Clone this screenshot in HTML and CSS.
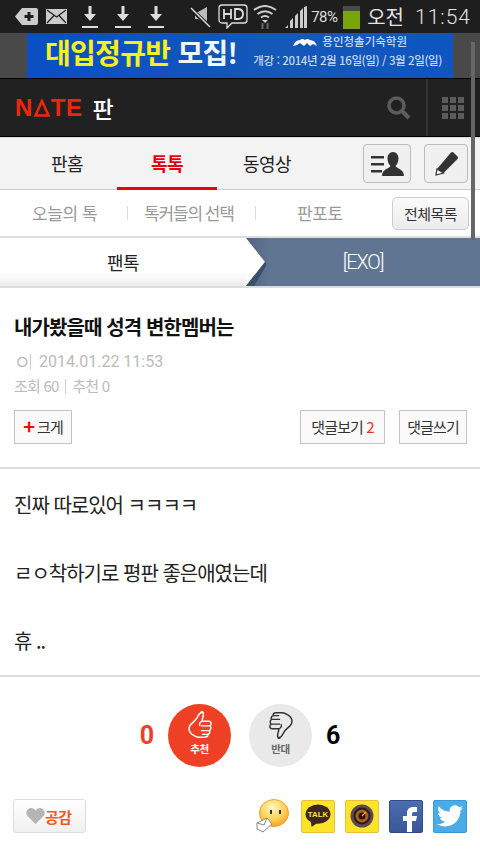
FILE: index.html
```html
<!DOCTYPE html>
<html lang="ko">
<head>
  <meta charset="UTF-8">
  <title>네이트 판</title>
  <link rel="stylesheet" href="styles.css">
</head>
<body>

  <!-- Status bar -->
  <div class="status-bar">
    <div class="status-left">
      <svg width="23" height="17" viewBox="0 0 23 17"><path d="M7 0h14a2 2 0 0 1 2 2v13a2 2 0 0 1-2 2H7L0 8.500z" fill="#ccc"/><path d="M14 4v9M9.500 8.500h9" stroke="#1e1e1e" stroke-width="3"/></svg>
      <svg class="mail" width="21" height="15" viewBox="0 0 21 15"><rect width="21" height="15" fill="#ccc"/><path d="M1 1l9.500 7L20 1M1 14l7-7.500M20 14l-7-7.500" fill="none" stroke="#1e1e1e" stroke-width="1.200"/></svg>
      <svg class="dl first" width="16" height="22" viewBox="0 0 16 22"><path d="M6.500 0h3v8H14l-6 7-6-7h4.500zM0 20h16v2H0z" fill="#ddd"/></svg>
      <svg class="dl" width="16" height="22" viewBox="0 0 16 22"><path d="M6.500 0h3v8H14l-6 7-6-7h4.500zM0 20h16v2H0z" fill="#ddd"/></svg>
      <svg class="dl" width="16" height="22" viewBox="0 0 16 22"><path d="M6.500 0h3v8H14l-6 7-6-7h4.500zM0 20h16v2H0z" fill="#ddd"/></svg>
    </div>
    <div class="status-right">
      <svg width="21" height="22" viewBox="0 0 21 22"><path d="M5 6h3l9-5v17l-9-5H5z" fill="#bbb"/><path d="M0 2l20 19" stroke="#1e1e1e" stroke-width="4"/><path d="M1 2l19 19" stroke="#ddd" stroke-width="1.500"/></svg>
      <svg class="hd" width="30" height="25" viewBox="0 0 30 25"><path d="M4 1h22a3 3 0 0 1 3 3v12a3 3 0 0 1-3 3H14l-5 5v-5H4a3 3 0 0 1-3-3V4a3 3 0 0 1 3-3z" fill="none" stroke="#ddd" stroke-width="1.300"/><path d="M6 5v10M13 5v10M6 10h7M17 5v10h3.500q4.500-.5 4.500-5t-4.500-5z" fill="none" stroke="#ddd" stroke-width="1.800"/></svg>
      <svg class="wifi" width="24" height="24" viewBox="0 0 24 24"><path d="M1 5q11-8 22 0M4.500 9q7.500-5.500 15 0M8 12.500q4-3 8 0" fill="none" stroke="#ccc" stroke-width="2"/><path d="M9 15l3 3 3-3z" fill="#ccc"/><path d="M9.500 24v-6M14.500 24v-6" stroke="#666" stroke-width="2"/></svg>
      <svg class="signal" width="23" height="22" viewBox="0 0 23 22"><path d="M0 22l3-3v3zM5 22v-7l3-3v10zM10 22V10l3-3v15zM15 22V5l3-3v20zM19 22V1l3-1v22z" fill="#ccc"/></svg>
      <span class="battery-pct">78%</span>
      <div class="battery"><div class="battery-fill"></div></div>
      <span class="clock"><span class="ampm">오전</span>11:54</span>
    </div>
  </div>

  <!-- Ad banner -->
  <div class="banner">
    <div class="banner-inner">
      <span class="banner-big"><span class="yellow">대입정규반</span> 모집!</span>
      <div class="banner-side">
        <span class="banner-school"><svg width="24" height="8" viewBox="0 0 24 8"><path d="M0 8q2-6 7-6 2-2 5 0 2-2 5 0 5 0 7 6l-4-2-3 2-3-3-3 3-4-3-3 2z" fill="#fff"/></svg>용인청솔기숙학원</span>
        <span class="banner-date">개강 : 2014년 2월 16일(일) / 3월 2일(일)</span>
      </div>
    </div>
  </div>

  <!-- Header -->
  <header class="site-header">
    <div class="logo"><span class="nate">N<svg width="18" height="19" viewBox="0 0 18 19"><path d="M9 3L15.500 17.500H2.500z" fill="none" stroke="#f0260a" stroke-width="2.500"/></svg>TE</span><span class="pan">판</span></div>
    <svg class="search" width="24" height="24" viewBox="0 0 24 24"><circle cx="9.500" cy="9.500" r="7.500" fill="none" stroke="#5c5c5c" stroke-width="3.500"/><path d="M15 15l7 7" stroke="#5c5c5c" stroke-width="4"/></svg>
    <div class="grid-btn">
      <i></i><i></i><i></i><i></i><i></i><i></i><i></i><i></i><i></i>
    </div>
  </header>

  <!-- Main tabs -->
  <nav class="main-nav">
    <a class="main-tab">판홈</a>
    <a class="main-tab active">톡톡</a>
    <a class="main-tab">동영상</a>
    <div class="nav-icons">
      <div class="icon-btn wide">
        <svg width="33" height="24" viewBox="0 0 33 24"><path d="M0 4h13v2.500H0zM0 11h13v2.500H0zM0 18h11v2.500H0z" fill="#333"/><path d="M22 0c3.500 0 5.500 3 5.500 6.500s-1.500 6-3 7.500c1 2.500 8.500 3 8.500 10H11c0-7 7.500-7.500 8.500-10-1.500-1.500-3-4-3-7.500S18.500 0 22 0z" fill="#333"/></svg>
      </div>
      <div class="icon-btn">
        <svg width="25" height="25" viewBox="0 0 25 25"><path d="M17 1.500q1.500-1 2.500 0l4 4q1 1 0 2.500L9.500 22 3 18z" fill="#333"/><path d="M3 18l6.500 4-7.500 2z" fill="#fff" stroke="#333" stroke-width="1.200"/></svg>
      </div>
    </div>
  </nav>

  <!-- Sub tabs -->
  <div class="sub-nav">
    <a class="sub-tab today">오늘의 톡</a>
    <i class="sub-sep"></i>
    <a class="sub-tab pick">톡커들의 선택</a>
    <i class="sub-sep"></i>
    <a class="sub-tab photo">판포토</a>
    <a class="all-btn">전체목록</a>
  </div>

  <!-- Breadcrumb -->
  <div class="crumb">
    <div class="crumb-left">팬톡</div>
    <div class="crumb-right">[EXO]</div>
    <svg class="crumb-arrow" width="20" height="48" viewBox="0 0 20 48"><path d="M0 0L19 24 0 48z" fill="#fff"/><path d="M0 48L19 24 21 26 8 48z" fill="#3c4f66"/></svg>
  </div>

  <!-- Article -->
  <article class="post-head">
    <h1 class="post-title">내가봤을때 성격 변한멤버는</h1>
    <div class="post-meta"><span class="author">ㅇ</span><i class="meta-sep"></i><span class="date">2014.01.22 11:53</span></div>
    <div class="post-count">조회 60 <i class="meta-sep"></i> 추천 0</div>
    <div class="post-btns">
      <a class="btn-line big-btn"><b class="plus">+</b>크게</a>
      <a class="btn-line reply-view">댓글보기 <span class="red">2</span></a>
      <a class="btn-line reply-write">댓글쓰기</a>
    </div>
  </article>

  <div class="post-body">
    <p>진짜 따로있어 ㅋㅋㅋㅋ</p>
    <p>ㄹㅇ착하기로 평판 좋은애였는데</p>
    <p>휴 ..</p>
  </div>

  <!-- Votes -->
  <div class="votes">
    <span class="vote-num up">0</span>
    <div class="vote-circle up">
      <svg width="26" height="28" viewBox="0 0 26 30"><path d="M14 1c2-1 3 1 2.500 4-.5 3-1.500 4-1 6h7c3 0 3 4 1 5 1.500 1 1.500 4-.5 5 1 1.500.5 3.500-1.500 4 0 2-1.500 3-3 3h-7c-3 0-5-2-7-3-3-2-4-6-2.500-9 1.500-3 6-5 8-9 1.500-3 2-5 5.500-6z" fill="none" stroke="#fff" stroke-width="1.600"/><path d="M15 11c-2 1-3 3-2 5M14 16h9M14 21h9M15 25h6" fill="none" stroke="#fff" stroke-width="1.300"/></svg>
      <span>추천</span>
    </div>
    <div class="vote-circle down">
      <svg width="26" height="28" viewBox="0 0 26 30"><g transform="rotate(180 13 15)"><path d="M14 1c2-1 3 1 2.500 4-.5 3-1.500 4-1 6h7c3 0 3 4 1 5 1.500 1 1.500 4-.5 5 1 1.500.5 3.500-1.500 4 0 2-1.500 3-3 3h-7c-3 0-5-2-7-3-3-2-4-6-2.500-9 1.500-3 6-5 8-9 1.500-3 2-5 5.500-6z" fill="none" stroke="#333" stroke-width="1.600"/><path d="M15 11c-2 1-3 3-2 5M14 16h9M14 21h9M15 25h6" fill="none" stroke="#333" stroke-width="1.300"/></g></svg>
      <span>반대</span>
    </div>
    <span class="vote-num down">6</span>
  </div>

  <!-- Share row -->
  <div class="share">
    <a class="like-btn">
      <svg width="19" height="16" viewBox="0 0 19 16"><path d="M9.500 16L1 7.500C-1 4 2 0 5 0c2 0 3.500 1 4.500 2.500C10.500 1 12 0 14 0c3 0 6 4 4 7.500z" fill="#b5b5b5"/></svg>공감
    </a>
    <div class="share-icons">
      <svg class="share-nate" width="33" height="34" viewBox="0 0 33 34"><defs><radialGradient id="smile" cx=".45" cy=".3" r=".75"><stop offset="0" stop-color="#fff6c8"/><stop offset=".55" stop-color="#fdd35a"/><stop offset="1" stop-color="#f39a1c"/></radialGradient></defs><ellipse cx="18" cy="14" rx="14.500" ry="13.500" fill="url(#smile)" stroke="#eda22c"/><path d="M15 11v4M24 11v4" stroke="#333" stroke-width="2"/><path d="M1 24l10-5 5 6-9 8-6-3z" fill="#fff" stroke="#888"/><path d="M1 24l7 2 3-7" fill="none" stroke="#888"/></svg>
      <div class="share-box kakao"><svg width="26" height="24" viewBox="0 0 28 26"><ellipse cx="14" cy="11" rx="13.500" ry="10.500" fill="#3e2723"/><path d="M6 17l1 8 7-5z" fill="#3e2723"/><text x="14" y="14.500" text-anchor="middle" class="talk">TALK</text></svg></div>
      <div class="share-box kakao"><svg width="24" height="24" viewBox="0 0 24 24"><circle cx="12" cy="12" r="11.500" fill="#5a4a55"/><circle cx="12" cy="12" r="8.500" fill="#2a1a12"/><circle cx="12" cy="12" r="6.500" fill="#a8601f"/><circle cx="12" cy="12" r="3.500" fill="#2a1208"/><path d="M12 12l4-4" stroke="#e8a050" stroke-width="1.200"/></svg></div>
      <div class="share-box fb"><svg width="32" height="31" viewBox="0 0 32 31"><path d="M17 31V20h-4v-5h4v-3c0-4 3-6 6-6h4v5h-3c-1.500 0-2 .7-2 2v2h5l-1 5h-4v11z" fill="#fff"/></svg></div>
      <div class="share-box tw"><svg width="26" height="22" viewBox="0 0 26 22"><path d="M26 3c-1 .5-2 .7-3 .8 1-.6 2-1.700 2.400-2.900-1 .6-2.200 1-3.400 1.300C21 1 19.600.3 18 .3c-3 0-5.400 2.400-5.400 5.300 0 .4 0 .8.100 1.200C8.300 6.600 4.300 4.500 1.800 1.300c-.5.800-.7 1.700-.7 2.700 0 1.800.9 3.500 2.400 4.400-.9 0-1.700-.3-2.400-.7 0 2.600 1.800 4.700 4.300 5.200-.8.200-1.600.3-2.400.1.700 2.100 2.600 3.600 5 3.700C6 18.200 3 19.300 0 19c2.400 1.500 5.200 2.400 8.200 2.400 9.800 0 15.200-8.100 15.200-15.200V5.500c1-.7 1.900-1.600 2.600-2.500z" fill="#fff"/></svg></div>
    </div>
  </div>

  <div class="scrollbar"></div>

</body>
</html>
```

FILE: styles.css
```css
* {
  box-sizing: border-box;
}

body {
  margin: 0;
  height: 853px;
  overflow: hidden;
  background: #fff;
  font-family: 'Noto Sans CJK KR', 'Noto Sans', sans-serif;
  color: #222;
  position: relative;
}

a {
  display: block;
}

/* Status bar */
.status-bar {
  height: 33px;
  background: #1e1e1e;
  display: flex;
  align-items: center;
  justify-content: space-between;
  padding: 0 9px 0 15px;
}

.status-left, .status-right {
  display: flex;
  align-items: center;
}

.status-left .mail {
  margin-left: 8px;
}

.status-left .dl {
  margin-left: 17px;
}

.status-left .dl.first {
  margin-left: 15px;
}

.status-right .hd {
  margin-left: 7px;
}

.status-right .wifi {
  margin-left: 5px;
}

.status-right .signal {
  margin-left: 8px;
}

.battery-pct {
  font-family: 'Roboto', sans-serif;
  font-size: 15px;
  color: #ddd;
  margin-left: 3px;
  width: 29px;
  letter-spacing: -0.5px;
}

.battery {
  width: 17px;
  height: 25px;
  margin-left: 3px;
  background: #4a4a4a;
  border-top: 2px solid #1e1e1e;
  display: flex;
  align-items: flex-end;
}

.battery-fill {
  width: 100%;
  height: 18px;
  background: #7aa50a;
}

.clock {
  display: flex;
  align-items: center;
  font-family: 'Roboto', sans-serif;
  font-size: 21px;
  font-weight: 300;
  color: #e4e4e4;
  margin-left: 7px;
  letter-spacing: 1px;
  white-space: nowrap;
}

.ampm {
  font-family: 'Noto Sans CJK KR', sans-serif;
  font-size: 20px;
  font-weight: 400;
  margin-right: 11px;
  letter-spacing: 0;
}

/* Banner */
.banner {
  height: 46px;
  background: #494949;
  padding: 0 27px;
  border-bottom: 1px solid #000;
}

.banner-inner {
  height: 45px;
  background: linear-gradient(90deg, #0a4fc4, #1458b8 60%, #0d55c0);
  display: flex;
  align-items: center;
  padding-left: 18px;
  overflow: hidden;
}

.banner-big {
  font-size: 28px;
  font-weight: 700;
  line-height: 30px;
  letter-spacing: -0.7px;
  color: #f2f6fa;
  white-space: nowrap;
  margin-top: -7px;
}

.yellow {
  color: #f7f01e;
}

.banner-side {
  display: flex;
  flex-direction: column;
  align-items: flex-end;
  margin-left: 16px;
  color: #c8d8ec;
  font-size: 11.5px;
  font-weight: 500;
  white-space: nowrap;
  line-height: 19px;
  margin-top: -10px;
}

.banner-school {
  margin-right: 35px;
}

.banner-school svg {
  margin-right: 5px;
}

.banner-date {
  letter-spacing: -0.4px;
}

/* Header */
.site-header {
  height: 58px;
  background: #212121;
  border-bottom: 1px solid #000;
  display: flex;
  align-items: center;
  padding-left: 15px;
}

.logo {
  display: flex;
  align-items: center;
  flex: 1;
}

.nate {
  display: flex;
  align-items: center;
  font-family: 'Liberation Sans', sans-serif;
  font-weight: 700;
  font-size: 24px;
  color: #f0260a;
  letter-spacing: 0.5px;
}

.pan {
  color: #fff;
  font-size: 23px;
  font-weight: 500;
  margin-left: 10px;
}

.search {
  margin-right: 15px;
}

.grid-btn {
  width: 54px;
  height: 57px;
  border-left: 2px solid #333;
  display: grid;
  grid-template-columns: repeat(3, 6px);
  grid-auto-rows: 6px;
  gap: 2px;
  align-content: center;
  padding-left: 14px;
}

.grid-btn i {
  background: #5c5c5c;
}

/* Main tabs */
.main-nav {
  height: 53px;
  background: #f3f3f3;
  border-top: 1px solid #ddd;
  border-bottom: 1px solid #ccc;
  display: flex;
  padding-left: 17px;
}

.main-tab {
  width: 100px;
  height: 52px;
  text-align: center;
  font-size: 18px;
  line-height: 51px;
  letter-spacing: -0.5px;
  color: #222;
}

.main-tab.active {
  color: #e60012;
  font-weight: 700;
  border-bottom: 3px solid #e60012;
}

.nav-icons {
  display: flex;
  gap: 13px;
  margin-left: auto;
  padding: 6px 12px 0 0;
}

.icon-btn {
  width: 44px;
  height: 39px;
  background: #f0f0f0;
  border: 1px solid #bbb;
  border-radius: 4px;
  display: flex;
  align-items: center;
  justify-content: center;
}

.icon-btn.wide {
  width: 48px;
}

/* Sub tabs */
.sub-nav {
  height: 48px;
  background: #fff;
  border-bottom: 2px solid #ddd;
  display: flex;
  align-items: center;
  color: #999;
  font-size: 17px;
  letter-spacing: -0.4px;
  position: relative;
}

.sub-tab {
  white-space: nowrap;
  margin-top: -2px;
}

.today {
  margin-left: 32px;
  width: 79px;
}

.sub-sep {
  width: 1px;
  height: 14px;
  background: #ddd;
  margin: 0 16px;
}

.pick {
  width: 95px;
  letter-spacing: -1.100px;
  word-spacing: -1px;
}

.photo {
  margin-left: 25px;
}

.all-btn {
  margin-left: auto;
  margin-right: 11px;
  width: 77px;
  height: 33px;
  border: 1px solid #ccc;
  border-radius: 5px;
  background: linear-gradient(#fafafa, #ececec);
  text-align: center;
  color: #333;
  font-size: 15px;
  line-height: 31px;
  letter-spacing: -0.5px;
}

/* Breadcrumb */
.crumb {
  height: 50px;
  display: flex;
  position: relative;
  border-bottom: 2px solid #ddd;
}

.crumb-left {
  width: 246px;
  background: linear-gradient(#fff 70%, #eee);
  text-align: center;
  font-size: 18px;
  line-height: 48px;
  letter-spacing: -0.5px;
}

.crumb-right {
  flex: 1;
  background: linear-gradient(90deg, #4f6480, #5f7591 10%);
  color: #fff;
  text-align: center;
  font-size: 20px;
  line-height: 48px;
  letter-spacing: -1.200px;
  font-family: 'Roboto', sans-serif;
  font-weight: 300;
}

.crumb-arrow {
  position: absolute;
  left: 246px;
  top: 0;
}

/* Article head */
.post-head {
  padding: 24px 13px 0 13px;
  height: 181px;
  border-bottom: 2px solid #ddd;
}

.post-title {
  margin: 0 0 0 1px;
  font-size: 20px;
  font-weight: 700;
  line-height: 30px;
  letter-spacing: -0.9px;
  color: #111;
}

.post-meta {
  display: flex;
  align-items: center;
  margin-top: 8px;
  height: 22px;
  color: #bbb;
  font-size: 18px;
  padding-left: 1px;
}

.author {
  width: 13px;
}

.meta-sep {
  display: inline-block;
  width: 1px;
  height: 15px;
  background: #ccc;
  vertical-align: -2px;
  margin: 0 3px;
}

.date {
  font-family: 'Roboto', sans-serif;
  margin-left: 5px;
  font-size: 16px;
}

.post-count {
  margin-top: 3px;
  padding-left: 1px;
  height: 22px;
  color: #bbb;
  font-size: 15px;
  line-height: 22px;
  letter-spacing: -0.8px;
}

.post-btns {
  display: flex;
  margin-top: 13px;
  gap: 14px;
  padding-left: 1px;
}

.btn-line {
  height: 34px;
  border: 1px solid #c4c4c8;
  background: #fafafa;
  text-align: center;
  font-size: 15px;
  line-height: 32px;
  letter-spacing: -0.9px;
  color: #333;
}

.big-btn {
  width: 58px;
  margin-right: auto;
}

.plus {
  color: #f00;
  font-size: 20px;
  margin-right: 3px;
  vertical-align: -1px;
  line-height: 20px;
}

.reply-view {
  width: 85px;
}

.reply-write {
  width: 68px;
}

.red {
  color: #f03010;
}

/* Article body */
.post-body {
  height: 208px;
  padding: 2px 14px 0;
  border-bottom: 2px solid #ddd;
  font-size: 20px;
  letter-spacing: -1px;
  color: #222;
}

.post-body p {
  margin: 0;
  height: 68px;
  line-height: 68px;
}

/* Votes */
.votes {
  display: flex;
  align-items: center;
  justify-content: center;
  margin-top: 27px;
  position: relative;
}

.vote-num {
  font-size: 25px;
  font-weight: 700;
  font-family: 'Roboto', sans-serif;
}

.vote-num.up {
  color: #ee4025;
  margin-right: 14px;
}

.vote-num.down {
  color: #000;
  margin-left: 14px;
}

.vote-circle {
  width: 63px;
  height: 63px;
  border-radius: 50%;
  display: flex;
  flex-direction: column;
  align-items: center;
  padding-top: 7px;
  font-size: 10.500px;
  font-weight: 700;
  line-height: 14px;
  letter-spacing: -0.5px;
}

.vote-circle span {
  margin-top: 3px;
}

.vote-circle.up {
  background: #ee4025;
  color: #fff;
}

.vote-circle.down {
  background: #e9e9e9;
  color: #666;
  margin-left: 18px;
}

/* Share row */
.share {
  display: flex;
  justify-content: space-between;
  align-items: center;
  padding: 0 13px;
  margin-top: 32px;
}

.like-btn {
  display: flex;
  align-items: center;
  width: 73px;
  height: 34px;
  padding-left: 12px;
  border: 1px solid #ddd;
  border-radius: 3px;
  background: linear-gradient(#fff, #f0f0f0);
  color: #f25a1e;
  font-size: 15px;
  font-weight: 700;
  letter-spacing: -0.5px;
}

.share-icons {
  display: flex;
  align-items: center;
  gap: 10px;
}

.share-nate {
  margin-right: 2px;
}

.share-box {
  width: 34px;
  height: 33px;
  border-radius: 2px;
  display: flex;
  align-items: center;
  justify-content: center;
  overflow: hidden;
}

.kakao {
  background: #fde428;
  border: 1px solid #e8c040;
}

.talk {
  font-family: 'Liberation Sans', sans-serif;
  font-size: 8.500px;
  font-weight: 700;
  fill: #fde428;
}

.fb {
  background: linear-gradient(#4d6db2, #3a5795);
  border: 1px solid #2f4a85;
}

.tw {
  background: #4aace6;
  border: 1px solid #3a9ad8;
}

/* Scrollbar over the page */
.scrollbar {
  position: absolute;
  left: 471px;
  top: 42px;
  width: 4px;
  height: 198px;
  background: #666;
}
```
